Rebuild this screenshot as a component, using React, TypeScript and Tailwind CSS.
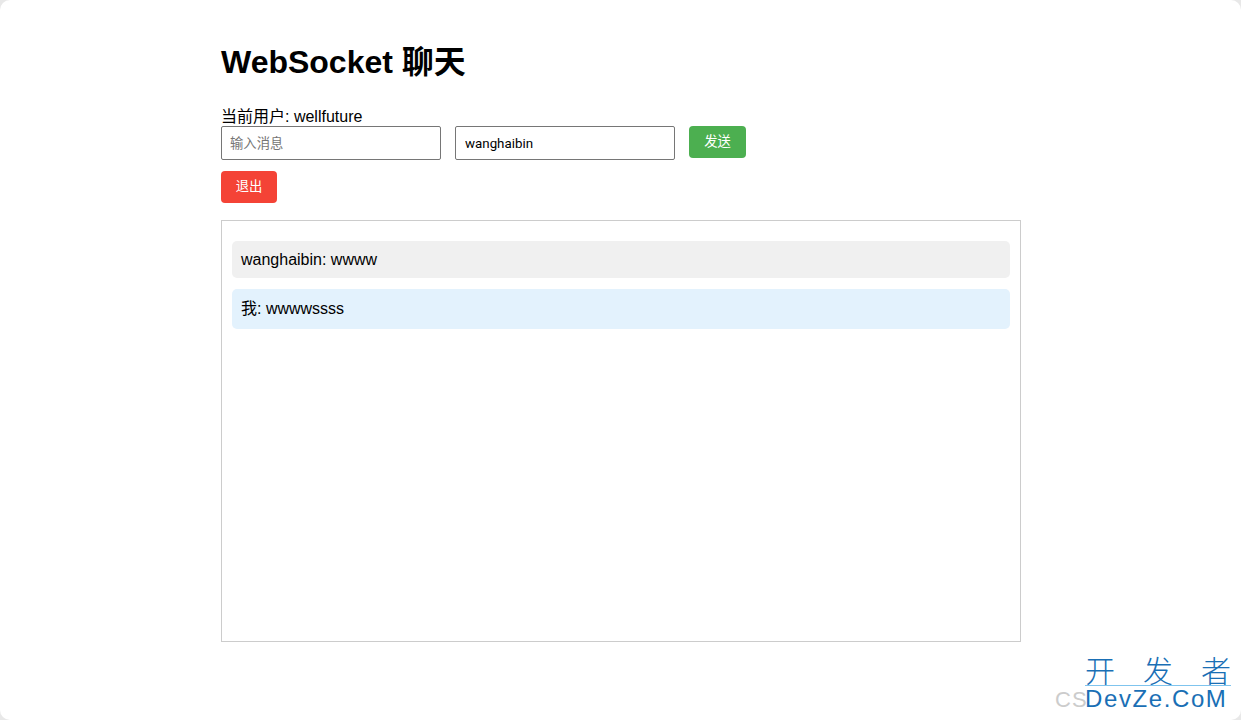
export default function App() {
  const font = { fontFamily: '"Liberation Sans", Arial, "Noto Sans CJK SC", sans-serif' };
  const uiFont = { fontFamily: 'Roboto, "Noto Sans CJK SC", sans-serif' };
  return (
    <div className="w-[1241px] h-[720px] bg-[#e8e8e8] overflow-hidden" style={font}>
      <div className="relative w-full h-full bg-white rounded-[10px] overflow-hidden text-black">
        <div className="w-[800px] ml-[221px] pt-[44px]">
          <h1 className="text-[32px] leading-[37px] font-bold m-0">WebSocket 聊天</h1>
          <div className="mt-[27px] text-[16px] leading-[18px]">当前用户: wellfuture</div>
          <div className="flex items-start gap-[14px]">
            <input
              className="w-[220px] h-[34px] border border-[#767676] rounded-[2px] px-[8px] text-[13.33px] outline-none placeholder:text-[#757575]"
              placeholder="输入消息"
              style={uiFont}
            />
            <input
              className="w-[220px] h-[34px] border border-[#767676] rounded-[2px] px-[9px] text-[13.33px] outline-none"
              defaultValue="wanghaibin"
              style={uiFont}
            />
            <button
              className="h-[32px] w-[57px] bg-[#4caf50] text-white text-[13.33px] rounded-[4px]"
              style={uiFont}
            >
              发送
            </button>
          </div>
          <button
            className="mt-[11px] h-[32px] w-[56px] bg-[#f44336] text-white text-[13.33px] rounded-[4px] block"
            style={uiFont}
          >
            退出
          </button>
          <div className="mt-[17px] h-[422px] border border-[#cccccc] px-[10px] pt-[20px]">
            <div className="bg-[#f0f0f0] rounded-[5px] px-[9px] h-[37px] flex items-center text-[16px]">
              wanghaibin: wwww
            </div>
            <div className="mt-[11px] bg-[#e3f2fd] rounded-[5px] px-[9px] h-[40px] flex items-center text-[16px]">
              我: wwwwssss
            </div>
          </div>
        </div>

        <div className="absolute left-[1055px] top-[688px] text-[22px] leading-[24px] text-[#cccccc] tracking-[1px] whitespace-nowrap">
          CS
        </div>
        <div className="absolute left-[1085px] top-[654px] w-[146px] flex flex-col items-stretch">
          <div
            className="flex justify-between text-[30px] leading-[30px] text-[#1a6fb5]"
            style={{ fontFamily: '"Noto Sans CJK SC", sans-serif', fontWeight: 300 }}
          >
            <span>开</span>
            <span>发</span>
            <span>者</span>
          </div>
          <div className="h-[1px] bg-[#7fc4ee] mt-[1px]"></div>
          <div className="text-[24px] leading-[25px] text-[#1a6fb5] tracking-[1.6px] whitespace-nowrap">DevZe.CoM</div>
        </div>
      </div>
    </div>
  );
}
